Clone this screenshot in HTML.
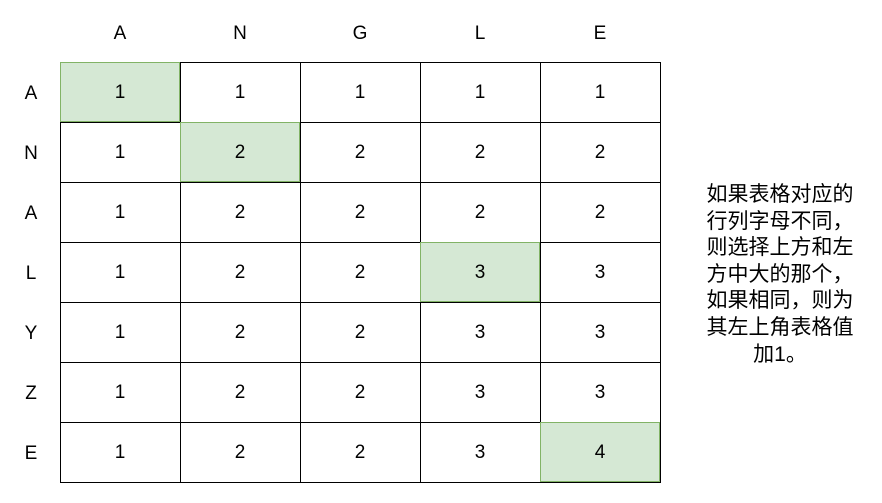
<!DOCTYPE html>
<html><head><meta charset="utf-8"><style>
body{margin:0;width:882px;height:503px;background:#fff;position:relative;overflow:hidden;font-family:"Liberation Sans","Noto Sans CJK SC",sans-serif;color:#000}
.c{position:absolute;width:120px;height:60px;box-sizing:border-box;display:flex;align-items:center;justify-content:center;font-size:19px;padding-top:1px}
.g{background:#d5e8d4;border:1px solid #82b366;z-index:2}
.h{position:absolute;font-size:19px;width:40px;text-align:center}
.t{position:absolute;left:690px;width:180px;top:182px;text-align:center;font-size:21px;line-height:26.6px}
</style></head><body>
<svg style="position:absolute;left:0;top:0" width="882" height="503">
<g stroke="#000" stroke-width="1">
<line x1="60" y1="62.5" x2="660" y2="62.5"/><line x1="60" y1="122.5" x2="660" y2="122.5"/><line x1="60" y1="182.5" x2="660" y2="182.5"/><line x1="60" y1="242.5" x2="660" y2="242.5"/><line x1="60" y1="302.5" x2="660" y2="302.5"/><line x1="60" y1="362.5" x2="660" y2="362.5"/><line x1="60" y1="422.5" x2="660" y2="422.5"/><line x1="60" y1="482.5" x2="660" y2="482.5"/>
<line x1="60.5" y1="62" x2="60.5" y2="483"/><line x1="180.5" y1="62" x2="180.5" y2="483"/><line x1="300.5" y1="62" x2="300.5" y2="483"/><line x1="420.5" y1="62" x2="420.5" y2="483"/><line x1="540.5" y1="62" x2="540.5" y2="483"/><line x1="660.5" y1="62" x2="660.5" y2="483"/>
</g></svg>
<div id="grid"></div>
<script>
const cols="ANGLE",rows="ANALYZE";
const v=[[1,1,1,1,1],[1,2,2,2,2],[1,2,2,2,2],[1,2,2,3,3],[1,2,2,3,3],[1,2,2,3,3],[1,2,2,3,4]];
const green=[[0,0],[1,1],[3,3],[6,4]];
let h="";
for(let j=0;j<5;j++)h+=`<div class="h" style="left:${100+j*120}px;top:23px">${cols[j]}</div>`;
for(let i=0;i<7;i++){h+=`<div class="h" style="left:11px;top:${83+i*60}px">${rows[i]}</div>`;
for(let j=0;j<5;j++){const g=green.some(p=>p[0]==i&&p[1]==j);h+=`<div class="c${g?' g':''}" style="left:${60+j*120}px;top:${62+i*60}px">${v[i][j]}</div>`;}}
document.getElementById("grid").innerHTML=h;
</script>
<div class="t">如果表格对应的<br>行列字母不同，<br>则选择上方和左<br>方中大的那个，<br>如果相同，则为<br>其左上角表格值<br>加1。</div>
</body></html>
